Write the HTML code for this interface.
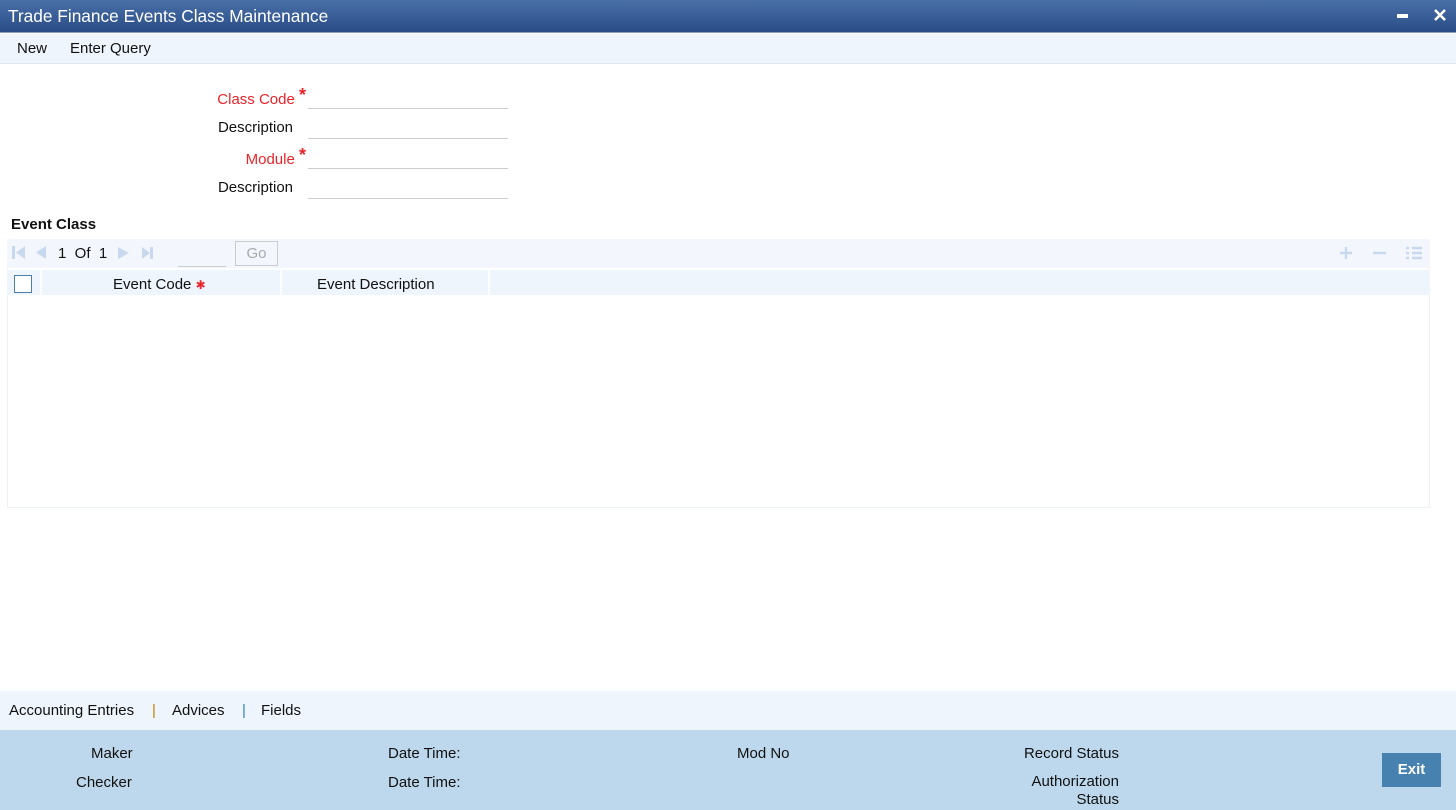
<!DOCTYPE html>
<html><head><meta charset="utf-8"><style>
*{margin:0;padding:0;box-sizing:border-box}
body{width:1456px;height:810px;position:relative;background:#fff;font-family:"Liberation Sans",Arial,sans-serif;font-size:15px;color:#111;overflow:hidden}
.a{position:absolute}
.title{left:0;top:0;width:1456px;height:33px;background:linear-gradient(#4a70a7,#2a4c88);border-bottom:1px solid #8aa0c0}
.title span{position:absolute;left:8px;top:6px;color:#fff;font-size:17.3px}
.tb{left:0;top:34px;width:1456px;height:30px;background:#eef5fd;border-bottom:1px solid #dfe6ef}
.lbl{text-align:right;width:200px;left:93px}
.red{color:#e8242a}
.ln{left:308px;width:200px;height:1px;background:#ccc}
.star{color:#e8242a;font-size:18px;font-weight:bold;position:relative;top:-3px}
</style></head><body>
<div class="a title"><span>Trade Finance Events Class Maintenance</span>
<div class="a" style="left:1397px;top:14px;width:11px;height:4px;background:#fff"></div>
<svg class="a" style="left:1433px;top:8px" width="14" height="14"><path d="M2 2L12 12M12 2L2 12" stroke="#fff" stroke-width="2.6"/></svg>
</div>
<div class="a tb"><span class="a" style="left:17px;top:6px">New</span><span class="a" style="left:70px;top:6px">Enter Query</span></div>

<div class="a lbl red" style="top:88px;left:106px">Class Code <span class="star">*</span></div>
<div class="a ln" style="top:108px"></div>
<div class="a lbl" style="top:119px">Description</div>
<div class="a ln" style="top:138px"></div>
<div class="a lbl red" style="top:148px;left:106px">Module <span class="star">*</span></div>
<div class="a ln" style="top:168px"></div>
<div class="a lbl" style="top:179px">Description</div>
<div class="a ln" style="top:198px"></div>

<div class="a" style="left:11px;top:216px;font-weight:bold">Event Class</div>
<div class="a" style="left:7px;top:239px;width:1423px;height:269px;border:1px solid #eef1f7;border-top:none"></div>
<div class="a" style="left:7px;top:239px;width:1423px;height:29px;background:#f3f7fd"></div>
<svg class="a" style="left:11px;top:245px" width="145" height="16" fill="#c8d8ee">
<rect x="1" y="1" width="3" height="13"/><path d="M14 1L5 7.5L14 14Z"/><path d="M35 1L25 7.5L35 14Z"/>
<path d="M107 2L118 8L107 14Z"/><path d="M131 2L139 8L131 14Z"/><rect x="139" y="2" width="3" height="12"/></svg>
<div class="a" style="left:58px;top:245px">1&nbsp; Of&nbsp; 1</div>
<div class="a" style="left:178px;top:266px;width:48px;height:1px;background:#ccc"></div>
<div class="a" style="left:235px;top:241px;width:43px;height:25px;border:1px solid #ccc;color:#aaa;text-align:center;line-height:23px">Go</div>
<svg class="a" style="left:1338px;top:245px" width="86" height="16" stroke="#c8d8ee" stroke-width="2.4" fill="none">
<path d="M2 8H14M8 2V14M35 8H48"/><path d="M68 3H71M68 8H71M68 13H71M74 3H84M74 8H84M74 13H84"/></svg>
<div class="a" style="left:7px;top:270px;width:1423px;height:25px;background:#eef5fd"></div>
<div class="a" style="left:40px;top:270px;width:2px;height:25px;background:#fff"></div>
<div class="a" style="left:280px;top:270px;width:2px;height:25px;background:#fff"></div>
<div class="a" style="left:488px;top:270px;width:2px;height:25px;background:#fff"></div>
<div class="a" style="left:14px;top:275px;width:18px;height:18px;border:1px solid #4a7fb0;background:#fff"></div>
<div class="a" style="left:113px;top:276px">Event Code <span class="red" style="font-size:12px">&#x2731;</span></div>
<div class="a" style="left:317px;top:276px">Event Description</div>

<div class="a" style="left:0;top:691px;width:1456px;height:39px;background:#eef5fd"></div>
<div class="a" style="left:9px;top:702px">Accounting Entries</div>
<div class="a" style="left:152px;top:702px;color:#c08000">|</div>
<div class="a" style="left:172px;top:702px">Advices</div>
<div class="a" style="left:242px;top:702px;color:#3080c0">|</div>
<div class="a" style="left:261px;top:702px">Fields</div>
<div class="a" style="left:0;top:730px;width:1456px;height:80px;background:#bdd8ec"></div>
<div class="a" style="left:91px;top:745px">Maker</div>
<div class="a" style="left:76px;top:774px">Checker</div>
<div class="a" style="left:388px;top:745px">Date Time:</div>
<div class="a" style="left:388px;top:774px">Date Time:</div>
<div class="a" style="left:737px;top:745px">Mod No</div>
<div class="a" style="left:970px;width:149px;text-align:right;top:745px">Record Status</div>
<div class="a" style="left:970px;width:149px;text-align:right;top:773px;line-height:18px">Authorization<br>Status</div>
<div class="a" style="left:1382px;top:753px;width:59px;height:34px;background:#4681b0;color:#fff;font-weight:bold;font-size:15px;text-align:center;line-height:34px">Exit</div>
</body></html>
